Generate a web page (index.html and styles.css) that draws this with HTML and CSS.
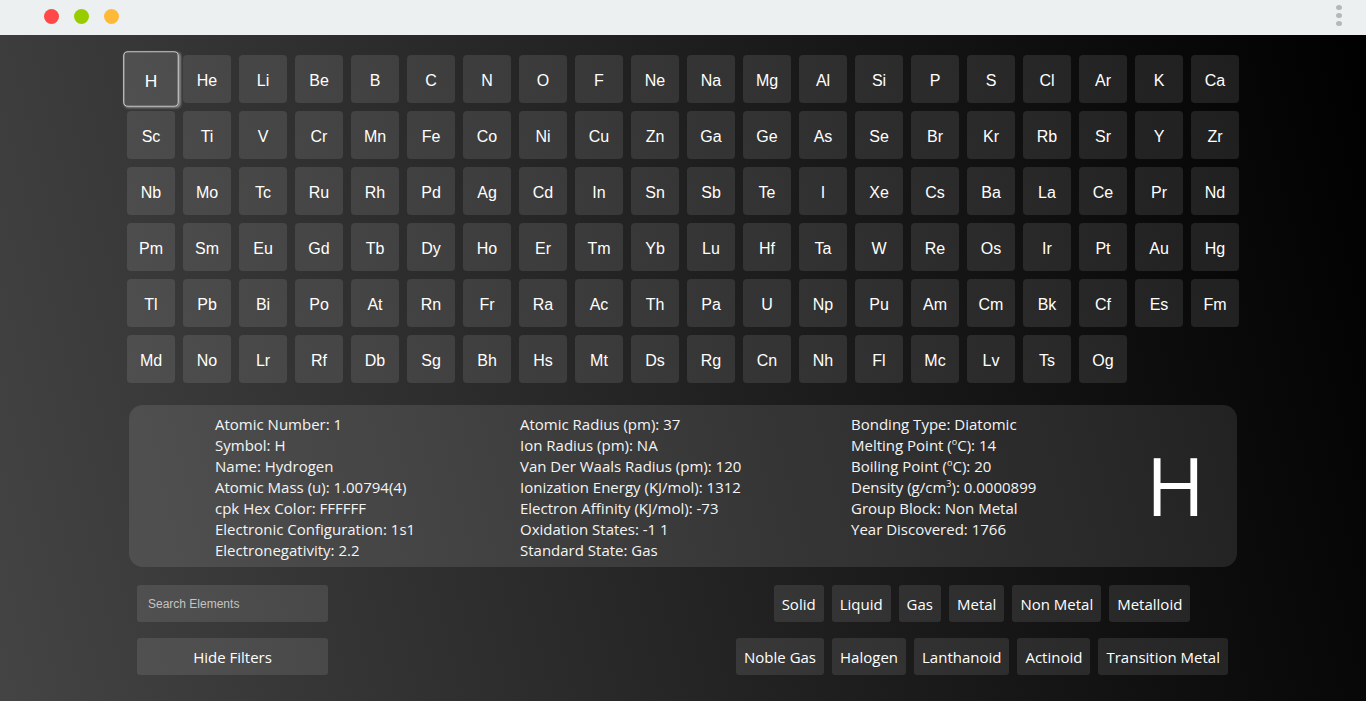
FILE: index.html
```html
<!DOCTYPE html>
<html lang="en">
<head>
<meta charset="utf-8">
<title>Periodic Table</title>
<link rel="stylesheet" href="styles.css">
</head>
<body>
<header class="chrome">
  <div class="lights">
    <span class="light red"></span>
    <span class="light green"></span>
    <span class="light yellow"></span>
  </div>
  <div class="kebab"><span></span><span></span><span></span></div>
</header>
<main class="page">
  <section class="table">
    <button class="tile selected">H</button><button class="tile">He</button><button class="tile">Li</button><button class="tile">Be</button><button class="tile">B</button><button class="tile">C</button><button class="tile">N</button><button class="tile">O</button><button class="tile">F</button><button class="tile">Ne</button><button class="tile">Na</button><button class="tile">Mg</button><button class="tile">Al</button><button class="tile">Si</button><button class="tile">P</button><button class="tile">S</button><button class="tile">Cl</button><button class="tile">Ar</button><button class="tile">K</button><button class="tile">Ca</button>
    <button class="tile">Sc</button><button class="tile">Ti</button><button class="tile">V</button><button class="tile">Cr</button><button class="tile">Mn</button><button class="tile">Fe</button><button class="tile">Co</button><button class="tile">Ni</button><button class="tile">Cu</button><button class="tile">Zn</button><button class="tile">Ga</button><button class="tile">Ge</button><button class="tile">As</button><button class="tile">Se</button><button class="tile">Br</button><button class="tile">Kr</button><button class="tile">Rb</button><button class="tile">Sr</button><button class="tile">Y</button><button class="tile">Zr</button>
    <button class="tile">Nb</button><button class="tile">Mo</button><button class="tile">Tc</button><button class="tile">Ru</button><button class="tile">Rh</button><button class="tile">Pd</button><button class="tile">Ag</button><button class="tile">Cd</button><button class="tile">In</button><button class="tile">Sn</button><button class="tile">Sb</button><button class="tile">Te</button><button class="tile">I</button><button class="tile">Xe</button><button class="tile">Cs</button><button class="tile">Ba</button><button class="tile">La</button><button class="tile">Ce</button><button class="tile">Pr</button><button class="tile">Nd</button>
    <button class="tile">Pm</button><button class="tile">Sm</button><button class="tile">Eu</button><button class="tile">Gd</button><button class="tile">Tb</button><button class="tile">Dy</button><button class="tile">Ho</button><button class="tile">Er</button><button class="tile">Tm</button><button class="tile">Yb</button><button class="tile">Lu</button><button class="tile">Hf</button><button class="tile">Ta</button><button class="tile">W</button><button class="tile">Re</button><button class="tile">Os</button><button class="tile">Ir</button><button class="tile">Pt</button><button class="tile">Au</button><button class="tile">Hg</button>
    <button class="tile">Tl</button><button class="tile">Pb</button><button class="tile">Bi</button><button class="tile">Po</button><button class="tile">At</button><button class="tile">Rn</button><button class="tile">Fr</button><button class="tile">Ra</button><button class="tile">Ac</button><button class="tile">Th</button><button class="tile">Pa</button><button class="tile">U</button><button class="tile">Np</button><button class="tile">Pu</button><button class="tile">Am</button><button class="tile">Cm</button><button class="tile">Bk</button><button class="tile">Cf</button><button class="tile">Es</button><button class="tile">Fm</button>
    <button class="tile">Md</button><button class="tile">No</button><button class="tile">Lr</button><button class="tile">Rf</button><button class="tile">Db</button><button class="tile">Sg</button><button class="tile">Bh</button><button class="tile">Hs</button><button class="tile">Mt</button><button class="tile">Ds</button><button class="tile">Rg</button><button class="tile">Cn</button><button class="tile">Nh</button><button class="tile">Fl</button><button class="tile">Mc</button><button class="tile">Lv</button><button class="tile">Ts</button><button class="tile">Og</button>
  </section>

  <section class="info">
    <ul class="col col1">
      <li>Atomic Number: 1</li>
      <li>Symbol: H</li>
      <li>Name: Hydrogen</li>
      <li>Atomic Mass (u): 1.00794(4)</li>
      <li>cpk Hex Color: FFFFFF</li>
      <li>Electronic Configuration: 1s1</li>
      <li>Electronegativity: 2.2</li>
    </ul>
    <ul class="col col2">
      <li>Atomic Radius (pm): 37</li>
      <li>Ion Radius (pm): NA</li>
      <li>Van Der Waals Radius (pm): 120</li>
      <li>Ionization Energy (KJ/mol): 1312</li>
      <li>Electron Affinity (KJ/mol): -73</li>
      <li>Oxidation States: -1 1</li>
      <li>Standard State: Gas</li>
    </ul>
    <ul class="col col3">
      <li>Bonding Type: Diatomic</li>
      <li>Melting Point (<sup>o</sup>C): 14</li>
      <li>Boiling Point (<sup>o</sup>C): 20</li>
      <li>Density (g/cm<sup>3</sup>): 0.0000899</li>
      <li>Group Block: Non Metal</li>
      <li>Year Discovered: 1766</li>
    </ul>
    <div class="symbol">H</div>
  </section>

  <section class="controls">
    <input class="search" type="text" placeholder="Search Elements">
    <div class="filters">
      <button class="filter">Solid</button>
      <button class="filter">Liquid</button>
      <button class="filter">Gas</button>
      <button class="filter">Metal</button>
      <button class="filter">Non Metal</button>
      <button class="filter">Metalloid</button>
    </div>
    <button class="hide">Hide Filters</button>
    <div class="filters">
      <button class="filter">Noble Gas</button>
      <button class="filter">Halogen</button>
      <button class="filter">Lanthanoid</button>
      <button class="filter">Actinoid</button>
      <button class="filter">Transition Metal</button>
    </div>
  </section>
</main>
</body>
</html>
```

FILE: styles.css
```css
* { box-sizing: border-box; }
html, body { margin: 0; padding: 0; height: 100%; }
body {
  background: #000;
  overflow: hidden;
  font-family: "Liberation Sans", Arial, sans-serif;
}

.chrome {
  height: 35px;
  background: #edf0f0;
  display: flex;
  align-items: center;
  justify-content: space-between;
  padding: 0 24px 2px 44px;
}
.lights { display: flex; gap: 15px; }
.light { width: 15px; height: 15px; border-radius: 50%; display: block; }
.red { background: #ff4848; }
.green { background: #99cc00; }
.yellow { background: #ffb938; }
.kebab { display: flex; flex-direction: column; gap: 3px; padding-bottom: 2px; }
.kebab span { width: 6px; height: 5px; border-radius: 50%; background: #b5b8b8; display: block; }

.page {
  height: 666px;
  background: linear-gradient(76deg, #444444 0%, #2c2c2c 35%, #141414 70%, #000000 100%);
  padding-top: 20px;
}

.table {
  width: 1112px;
  margin: 0 auto;
  display: grid;
  grid-template-columns: repeat(20, 48px);
  grid-auto-rows: 48px;
  gap: 8px;
}
.tile {
  border: 0;
  padding: 3px 0 0;
  margin: 0;
  border-radius: 4px;
  background: rgba(255, 255, 255, 0.1);
  color: #fff;
  font-family: "Liberation Sans", Arial, sans-serif;
  font-size: 16px;
}
.tile.selected {
  transform: scale(1.16);
  border: 1.5px solid #cccccc;
  box-shadow: 1px 1px 2px rgba(255, 255, 255, 0.4);
  font-size: 15px;
  padding-top: 2px;
  background: rgba(255, 255, 255, 0.12);
}

.info {
  width: 1108px;
  height: 162px;
  margin: 22px auto 0;
  border-radius: 14px;
  background: rgba(255, 255, 255, 0.1);
  display: grid;
  grid-template-columns: 86px 305px 331px 295px 1fr;
  align-items: start;
  padding-top: 9px;
  color: #f4f4f4;
  font-family: "Open Sans", sans-serif;
  font-size: 15px;
}
.col { list-style: none; margin: 0; padding: 0; line-height: 21px; white-space: nowrap; }
.col1 { grid-column: 2; }
.col2 { grid-column: 3; }
.col3 { grid-column: 4; }
.col sup { font-size: 9px; line-height: 0; vertical-align: 6px; }
.symbol {
  grid-column: 5;
  align-self: center;
  margin-top: -12px;
  font-size: 80px;
  font-weight: 400;
  color: #fff;
  line-height: 1;
}

.controls {
  width: 1108px;
  margin: 18px auto 0;
  padding-left: 8px;
  display: grid;
  grid-template-columns: 191px 1fr;
  column-gap: 399px;
  row-gap: 16px;
}
.search {
  height: 37px;
  border: 0;
  border-radius: 3px;
  background: rgba(255, 255, 255, 0.1);
  padding: 0 11px;
  color: #fff;
  font-family: "Liberation Sans", Arial, sans-serif;
  font-size: 12px;
  outline: none;
}
.search::placeholder { color: #c4c4c4; }
.hide {
  height: 37px;
  border: 0;
  border-radius: 3px;
  background: rgba(255, 255, 255, 0.1);
  color: #fff;
  font-family: "Open Sans", sans-serif;
  font-size: 15px;
  padding-top: 2px;
}
.filters { display: flex; justify-content: center; gap: 8px; }
.filter {
  height: 37px;
  border: 0;
  border-radius: 3px;
  padding: 0 8px;
  background: rgba(255, 255, 255, 0.1);
  color: #fff;
  font-family: "Open Sans", sans-serif;
  font-size: 15px;
}
```
